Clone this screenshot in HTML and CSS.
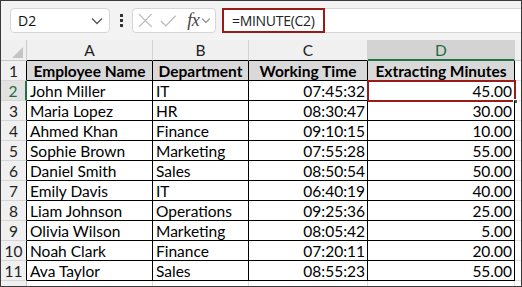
FILE: index.html
```html
<!DOCTYPE html>
<html>
<head>
<meta charset="utf-8">
<link rel="stylesheet" href="styles.css">
</head>
<body>
<div class="frame">
  <div class="toolbar">
    <div class="namebox">
      <span class="ref">D2</span>
      <svg class="chev" width="12" height="8" viewBox="0 0 12 8"><path d="M1 1.5 L6 6.5 L11 1.5" fill="none" stroke="#555" stroke-width="1.3"/></svg>
    </div>
    <div class="dots"><i></i><i></i><i></i></div>
    <div class="fxbox">
      <svg width="15" height="15" viewBox="0 0 15 15"><path d="M1 1 L14 14 M14 1 L1 14" stroke="#b8b8b8" stroke-width="1.3" fill="none"/></svg>
      <svg width="17" height="14" viewBox="0 0 17 14"><path d="M1 7 L6 12 L16 1.5" stroke="#b8b8b8" stroke-width="1.3" fill="none"/></svg>
      <span class="fx">fx</span>
      <svg class="chev2" width="10" height="7" viewBox="0 0 10 7"><path d="M1 1.5 L5 5.5 L9 1.5" fill="none" stroke="#888" stroke-width="1.2"/></svg>
    </div>
    <div class="formula"><span class="fbox">=MINUTE(C2)</span></div>
  </div>
  <div class="sheet">
    <div class="ch corner"><span class="tri"></span></div>
    <div class="ch">A</div>
    <div class="ch">B</div>
    <div class="ch">C</div>
    <div class="ch sel">D</div>
    <div class="ch fill"></div>

    <div class="rh">1</div>
    <div class="c hd">Employee Name</div>
    <div class="c hd">Department</div>
    <div class="c hd">Working Time</div>
    <div class="c hd">Extracting Minutes</div>
    <div class="f"></div>

    <div class="rh rsel">2</div>
    <div class="c">John Miller</div>
    <div class="c">IT</div>
    <div class="c n">07:45:32</div>
    <div class="c n active">45.00<span class="handle"></span></div>
    <div class="f"></div>

    <div class="rh">3</div>
    <div class="c">Maria Lopez</div>
    <div class="c">HR</div>
    <div class="c n">08:30:47</div>
    <div class="c n">30.00</div>
    <div class="f"></div>

    <div class="rh">4</div>
    <div class="c">Ahmed Khan</div>
    <div class="c">Finance</div>
    <div class="c n">09:10:15</div>
    <div class="c n">10.00</div>
    <div class="f"></div>

    <div class="rh">5</div>
    <div class="c">Sophie Brown</div>
    <div class="c">Marketing</div>
    <div class="c n">07:55:28</div>
    <div class="c n">55.00</div>
    <div class="f"></div>

    <div class="rh">6</div>
    <div class="c">Daniel Smith</div>
    <div class="c">Sales</div>
    <div class="c n">08:50:54</div>
    <div class="c n">50.00</div>
    <div class="f"></div>

    <div class="rh">7</div>
    <div class="c">Emily Davis</div>
    <div class="c">IT</div>
    <div class="c n">06:40:19</div>
    <div class="c n">40.00</div>
    <div class="f"></div>

    <div class="rh">8</div>
    <div class="c">Liam Johnson</div>
    <div class="c">Operations</div>
    <div class="c n">09:25:36</div>
    <div class="c n">25.00</div>
    <div class="f"></div>

    <div class="rh">9</div>
    <div class="c">Olivia Wilson</div>
    <div class="c">Marketing</div>
    <div class="c n">08:05:42</div>
    <div class="c n">5.00</div>
    <div class="f"></div>

    <div class="rh">10</div>
    <div class="c">Noah Clark</div>
    <div class="c">Finance</div>
    <div class="c n">07:20:11</div>
    <div class="c n">20.00</div>
    <div class="f"></div>

    <div class="rh">11</div>
    <div class="c">Ava Taylor</div>
    <div class="c">Sales</div>
    <div class="c n">08:55:23</div>
    <div class="c n">55.00</div>
    <div class="f"></div>

    <div class="rh last"></div>
    <div class="e"></div>
    <div class="e"></div>
    <div class="e"></div>
    <div class="e"></div>
    <div class="e fl"></div>
  </div>
</div>
</body>
</html>
```
FILE: styles.css
```css
* { box-sizing: border-box; }
html, body { margin: 0; padding: 0; background: #fff; }
body { font-family: Lato, "Liberation Sans", sans-serif; font-size: 15.5px; color: #000; }

.frame {
  width: 522px;
  height: 287px;
  border: 1px solid #3a3a3a;
  background: #f3f3f3;
  overflow: hidden;
}

.toolbar {
  height: 39px;
  display: flex;
  align-items: flex-start;
  padding: 7px 0 0 9px;
}

.namebox {
  width: 100px;
  height: 25px;
  background: #fff;
  border: 1px solid #d6d6d6;
  border-radius: 4px;
  display: flex;
  align-items: center;
  justify-content: space-between;
  padding: 0 6px 0 7px;
  font-family: "Open Sans", sans-serif;
  font-size: 14px;
  color: #111;
}
.namebox .chev { margin-top: 1px; }

.dots {
  width: 22px;
  height: 25px;
  display: flex;
  flex-direction: column;
  align-items: center;
  justify-content: center;
  gap: 2px;
}
.dots i { display: block; width: 3px; height: 3px; background: #333; }

.fxbox {
  width: 84px;
  height: 25px;
  background: #fff;
  border: 1px solid #d6d6d6;
  border-radius: 4px;
  display: flex;
  align-items: center;
  padding: 0 4px 0 5px;
  gap: 7px;
}
.fx {
  font-family: "Liberation Serif", serif;
  font-style: italic;
  font-size: 18px;
  color: #444;
  margin-left: 4px;
  letter-spacing: -0.5px;
}
.fxbox .chev2 { margin-left: -5px; }

.formula {
  flex: 1;
  margin-left: 6px;
  height: 25px;
  background: #fff;
  border-top: 1px solid #d6d6d6;
  border-bottom: 1px solid #d6d6d6;
  display: flex;
  align-items: stretch;
}
.fbox {
  width: 103px;
  border: 2px solid #9a1a1a;
  display: flex;
  align-items: center;
  padding-left: 8px;
  margin-top: -1px;
  margin-bottom: -1px;
  font-family: "Open Sans", sans-serif;
  font-size: 14px;
  color: #222;
  letter-spacing: -0.3px;
}

.sheet {
  display: grid;
  grid-template-columns: 26px 126px 96px 119px 147px 1fr;
  grid-template-rows: 21px repeat(11, 20px) 1fr;
  height: 246px;
  background: #fff;
}

.ch {
  background: #f0f0f0;
  border-right: 1px solid #d2d2d2;
  border-bottom: 1px solid #000;
  display: flex;
  align-items: center;
  justify-content: center;
  color: #222;
  font-size: 15.5px;
}
.ch.corner { border-bottom-color: #c8c8c8; border-right-color: #c8c8c8; position: relative; }
.ch.fill { border-right: none; border-bottom-color: #c8c8c8; }
.ch.sel {
  background: #d3d3d3;
  color: #1e6b40;
  border-bottom: 2px solid #217346;
}
.tri {
  position: absolute;
  right: 3px;
  bottom: 2px;
  width: 0;
  height: 0;
  border-left: 11px solid transparent;
  border-bottom: 11px solid #c4c4c4;
}

.rh {
  background: #f0f0f0;
  border-right: 1px solid #000;
  border-bottom: 1px solid #d6d6d6;
  display: flex;
  align-items: center;
  justify-content: center;
  color: #222;
  font-size: 15.5px;
}
.rh.rsel {
  color: #1e6b40;
  background: #e2e2e2;
  border-right: 2px solid #217346;
}
.rh.last { border-bottom: none; border-right-color: #c8c8c8; }

.c {
  border-right: 1px solid #000;
  border-bottom: 1px solid #000;
  display: flex;
  align-items: center;
  padding: 0 3px 0 3px;
  white-space: nowrap;
  overflow: visible;
  position: relative;
}
.c.hd {
  background: #d9d9d9;
  font-weight: 700;
  justify-content: center;
}
.c.n { justify-content: flex-end; padding-right: 2px; }
.c.active {
  outline: 2px solid #9a1a1a;
  outline-offset: -1px;
}
.handle {
  position: absolute;
  right: -4px;
  bottom: -4px;
  width: 5px;
  height: 5px;
  background: #217346;
  border: 1px solid #fff;
}
.f { border-bottom: 1px solid #e0e0e0; background: #fff; }
.e { background: #fff; border-right: 1px solid #e0e0e0; }
.e.fl { border-right: none; }
```
